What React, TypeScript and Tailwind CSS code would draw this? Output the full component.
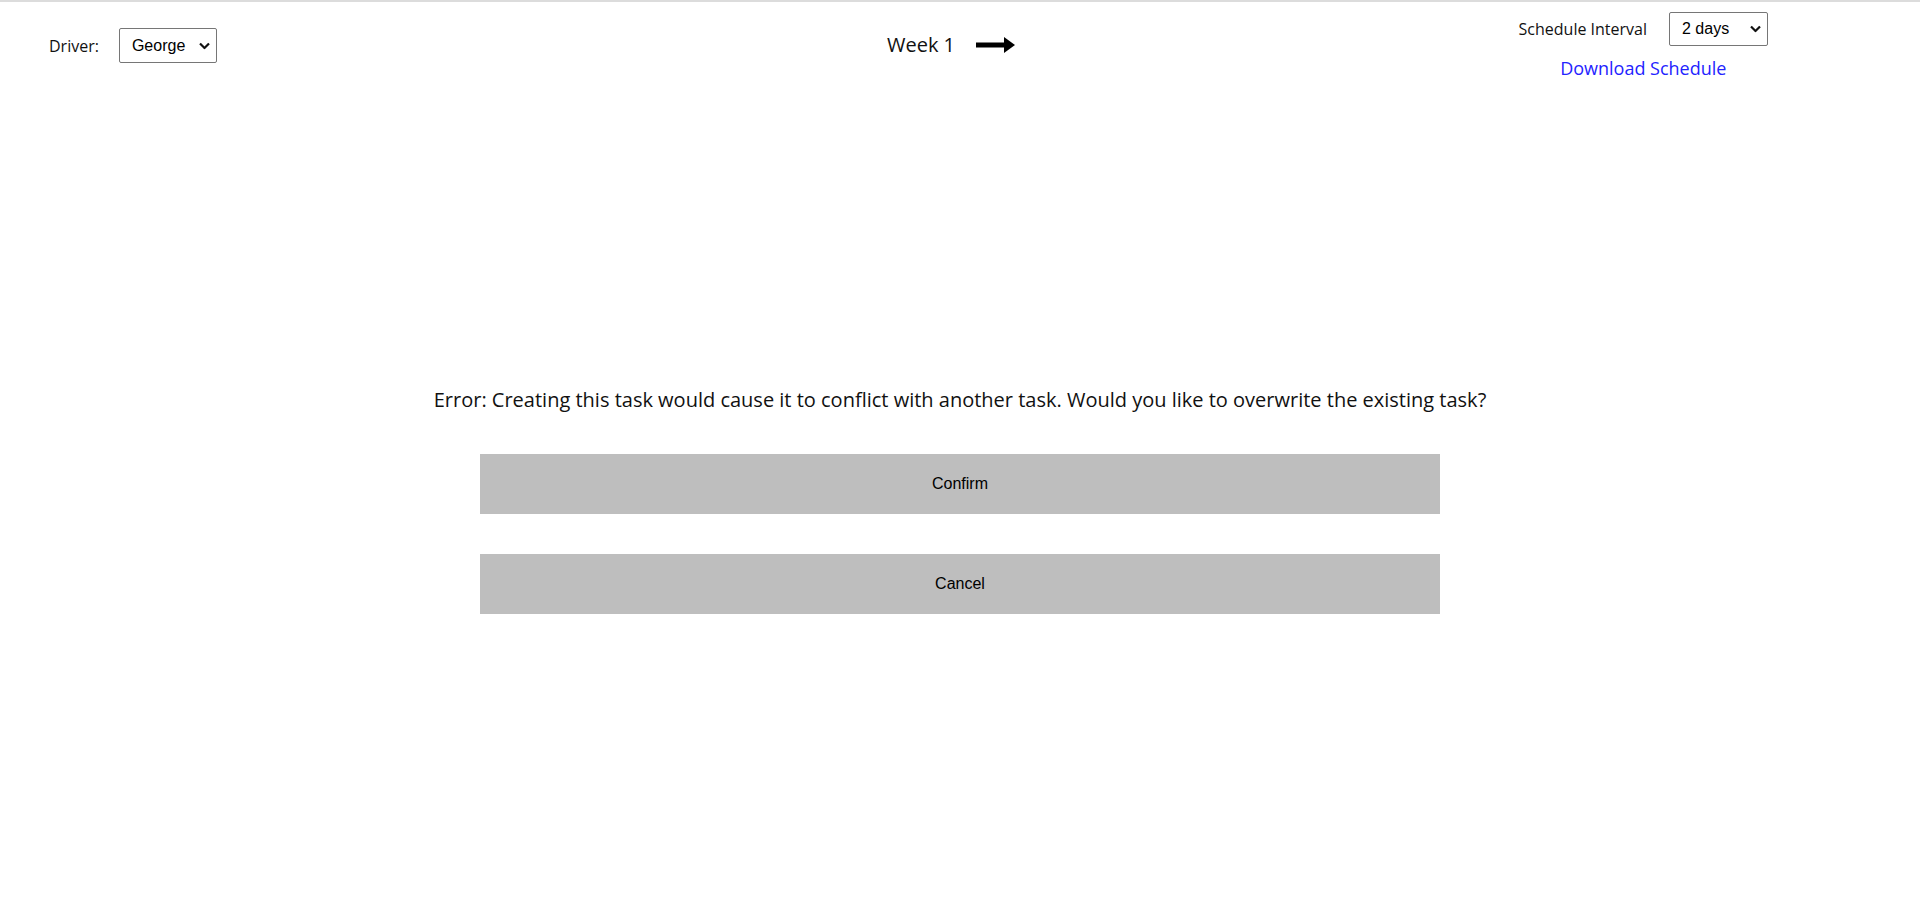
import { useState } from "react";

function Chevron() {
  return (
    <svg
      width="11"
      height="7"
      viewBox="0 0 11 7"
      className="pointer-events-none absolute right-[7px] top-1/2 -translate-y-1/2"
    >
      <polyline points="1,1 5.5,5.5 10,1" fill="none" stroke="#111" strokeWidth="2.2" />
    </svg>
  );
}

function Select({
  value,
  onChange,
  options,
  className,
}: {
  value: string;
  onChange: (v: string) => void;
  options: string[];
  className: string;
}) {
  return (
    <div className={"relative " + className}>
      <select
        value={value}
        onChange={(e) => onChange(e.target.value)}
        className="h-full w-full appearance-none rounded-[2px] border border-[#767676] bg-white pl-[12px] pr-[24px] font-['Liberation_Sans',Arial,sans-serif] text-[16px] text-black outline-none"
      >
        {options.map((o) => (
          <option key={o}>{o}</option>
        ))}
      </select>
      <Chevron />
    </div>
  );
}

export default function App() {
  const [driver, setDriver] = useState("George");
  const [interval, setInterval] = useState("2 days");

  return (
    <div className="min-h-screen border-t-2 border-[#dcdcdc] bg-white font-['Open_Sans',sans-serif] text-[#111]">
      {/* Header */}
      <div className="flex h-[92px] items-start">
        <div className="flex-1">
          <div className="flex items-center gap-[20px] pl-[49px] pt-[26px]">
            <span className="text-[16px]">Driver:</span>
            <Select
              value={driver}
              onChange={setDriver}
              options={["George", "Anna", "Mike"]}
              className="h-[35px] w-[98px]"
            />
          </div>
        </div>

        <div className="mr-[18px] flex items-center gap-[21px] pt-[33px]">
          <span className="text-[20px] leading-none">Week 1</span>
          <svg width="39" height="16" viewBox="0 0 39 16">
            <rect x="0" y="5.5" width="30" height="5" fill="#000" />
            <polygon points="28,0 39,8 28,16" fill="#000" />
          </svg>
        </div>

        <div className="flex-1">
          <div className="flex justify-end pr-[152px] pt-[10px]">
            <div className="flex flex-col items-center">
              <div className="flex items-center gap-[22px]">
                <span className="text-[16px]">Schedule Interval</span>
                <Select
                  value={interval}
                  onChange={setInterval}
                  options={["1 day", "2 days", "3 days", "1 week"]}
                  className="h-[34px] w-[99px]"
                />
              </div>
              <a href="#" className="mt-[10px] text-[18px] leading-[25px] text-[#2323ff]">
                Download Schedule
              </a>
            </div>
          </div>
        </div>
      </div>

      {/* Conflict dialog */}
      <div className="flex flex-col items-center pt-[292px]">
        <p className="text-[20px] leading-[27px]">
          Error: Creating this task would cause it to conflict with another task. Would you like to overwrite the existing task?
        </p>
        <button className="mt-[41px] h-[60px] w-[960px] bg-[#bebebe] font-['Liberation_Sans',Arial,sans-serif] text-[16px] text-black">
          Confirm
        </button>
        <button className="mt-[40px] h-[60px] w-[960px] bg-[#bebebe] font-['Liberation_Sans',Arial,sans-serif] text-[16px] text-black">
          Cancel
        </button>
      </div>
    </div>
  );
}
